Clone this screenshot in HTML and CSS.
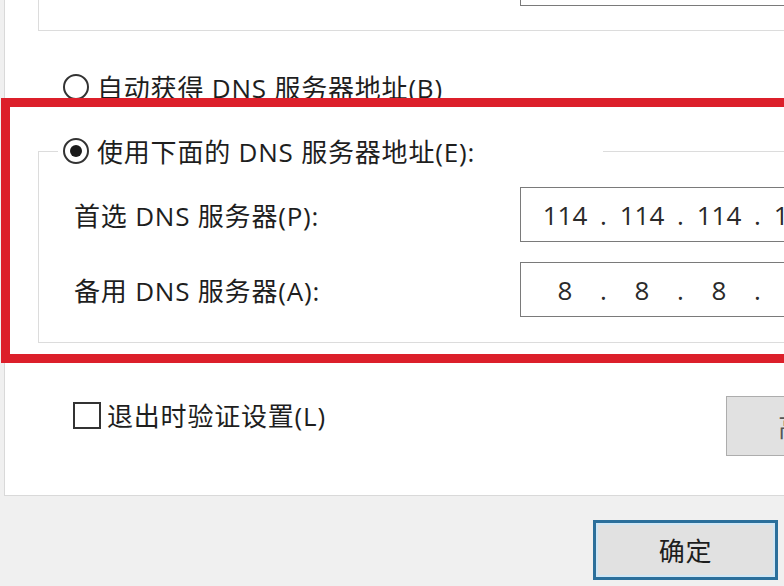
FILE: index.html
```html
<!DOCTYPE html>
<html>
<head>
    <meta charset="utf-8">
    <title>Internet 协议版本 4 (TCP/IPv4) 属性</title>
    <link rel="stylesheet" href="styles.css">
</head>
<body>
    <div class="dialog">
        <div class="panel">
            <div class="group group-prev">
                <div class="ip-box ip-box-cut"></div>
            </div>

            <label class="radio-row radio-auto">
                <span class="radio"></span>
                自动获得 DNS 服务器地址(B)
            </label>

            <fieldset class="group dns-group">
                <legend class="radio-row">
                    <span class="radio checked"></span>
                    使用下面的 DNS 服务器地址(E):
                </legend>

                <div class="field-row">
                    <span class="field-label">首选 DNS 服务器(P):</span>
                    <div class="ip-box">
                        <span class="seg">114</span><span class="dot">.</span>
                        <span class="seg">114</span><span class="dot">.</span>
                        <span class="seg">114</span><span class="dot">.</span>
                        <span class="seg">114</span>
                    </div>
                </div>

                <div class="field-row">
                    <span class="field-label">备用 DNS 服务器(A):</span>
                    <div class="ip-box">
                        <span class="seg">8</span><span class="dot">.</span>
                        <span class="seg">8</span><span class="dot">.</span>
                        <span class="seg">8</span><span class="dot">.</span>
                        <span class="seg">8</span>
                    </div>
                </div>
            </fieldset>

            <div class="bottom-row">
                <label class="check-row">
                    <span class="checkbox"></span>
                    退出时验证设置(L)
                </label>
                <button class="button button-advanced">高级(V)...</button>
            </div>
        </div>

        <div class="footer">
            <button class="button button-default">确定</button>
            <button class="button">取消</button>
        </div>

        <!-- annotation drawn over the dialog -->
        <div class="highlight"></div>
    </div>
</body>
</html>
```

FILE: styles.css
```css
:root {
    --dialog-bg: #f0f0f0;
    --surface: #ffffff;
    --text: #1e1e1e;
    --group-border: #dcdcdc;
    --panel-border: #d9d9d9;
    --input-border: #7a7a7a;
    --button-bg: #e1e1e1;
    --button-border: #adadad;
    --focus: #2b6f9b;
    --mark: #dc1f2a;
}

* {
    margin: 0;
    padding: 0;
    box-sizing: border-box;
}

body {
    font-family: "Open Sans", "Noto Sans CJK SC", sans-serif;
    font-size: 26px;
    letter-spacing: 0.8px;
    color: var(--text);
    background-color: var(--dialog-bg);
    overflow: hidden;
    width: 784px;
    height: 586px;
}

.dialog {
    position: relative;
    width: 1100px;
}

.panel {
    margin-left: 4px;
    height: 496px;
    background-color: var(--surface);
    border-left: 1px solid var(--panel-border);
    border-bottom: 1px solid var(--panel-border);
}

.group {
    margin-left: 33px;
    border: 1px solid var(--group-border);
}

.group-prev {
    height: 31px;
    border-top: none;
    padding-left: 481px;
}

.ip-box {
    display: flex;
    align-items: center;
    width: 360px;
    height: 55px;
    padding-left: 14px;
    background-color: var(--surface);
    border: 1px solid var(--input-border);
    font-size: 26px;
    letter-spacing: 0;
    color: #2a2a2a;
}

.ip-box-cut {
    height: 6px;
    border-top: none;
}

.seg {
    width: 60px;
    text-align: center;
}

.dot {
    width: 17px;
    text-align: center;
}

.radio-row {
    display: flex;
    align-items: center;
    gap: 8px;
    height: 30px;
}

.radio-auto {
    margin: 41px 0 0 58px;
}

.radio {
    width: 26px;
    height: 26px;
    border: 2px solid #333;
    border-radius: 50%;
    background-color: var(--surface);
    display: flex;
    align-items: center;
    justify-content: center;
    flex-shrink: 0;
}

.radio.checked::after {
    content: "";
    width: 12px;
    height: 12px;
    border-radius: 50%;
    background-color: #1a1a1a;
}

.dns-group {
    margin-top: 34px;
    padding: 0 0 25px 35px;
    width: 900px;
}

.dns-group legend {
    width: 545px;
    margin-left: -16px;
    padding-left: 5px;
    background-color: var(--surface);
}

.field-row {
    display: flex;
    align-items: center;
    margin-top: 21px;
}

.field-row + .field-row {
    margin-top: 20px;
}

.field-label {
    width: 446px;
    flex-shrink: 0;
}

.bottom-row {
    display: flex;
    align-items: flex-start;
    margin-top: 53px;
    padding-left: 68px;
}

.check-row {
    display: flex;
    align-items: center;
    gap: 6px;
    height: 30px;
    margin-top: 4px;
    flex: 0 0 653px;
}

.checkbox {
    width: 28px;
    height: 27px;
    border: 2px solid #333;
    background-color: var(--surface);
}

.button {
    font-family: inherit;
    font-size: 26px;
    letter-spacing: 0.8px;
    color: var(--text);
    width: 185px;
    height: 60px;
    background-color: var(--button-bg);
    border: 1px solid var(--button-border);
}

.button-advanced {
    width: 214px;
    color: #555;
}

.footer {
    display: flex;
    gap: 20px;
    padding: 24px 0 0 593px;
}

.button-default {
    border: 3px solid var(--focus);
    box-shadow: inset 0 0 0 2px #cfe6f5;
}

.highlight {
    position: absolute;
    left: 1px;
    top: 98px;
    width: 900px;
    height: 265px;
    border: 9px solid var(--mark);
}
```
